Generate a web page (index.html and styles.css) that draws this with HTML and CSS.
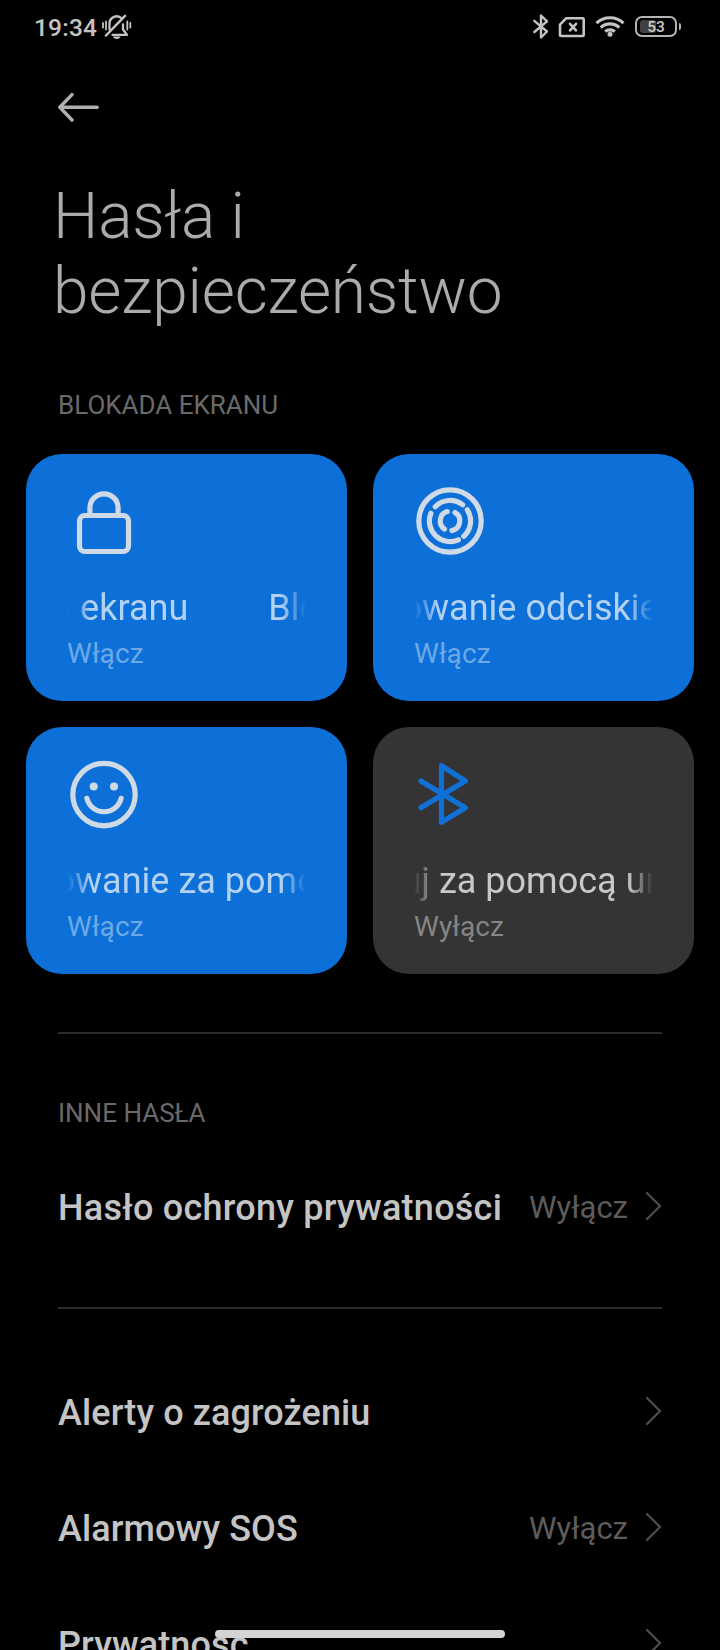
FILE: index.html
```html
<!DOCTYPE html>
<html lang="pl">
<head>
<meta charset="utf-8">
<title>Hasła i bezpieczeństwo</title>
<link rel="stylesheet" href="styles.css">
</head>
<body>
<div class="screen">
  <header class="status">
    <span class="time">19:34</span>
    <svg class="bell" width="32" height="30" viewBox="0 0 32 30" fill="none" stroke="#c4c4c4" stroke-width="2.300" stroke-linecap="round" stroke-linejoin="round">
      <path d="M8.500 17.500V11.500a7.200 7.200 0 0 1 12.300-5M22 12.500v5l4 5.400H11.500"/>
      <path d="M5 23.500 24 3.800" stroke-width="2.500"/>
      <path d="M12 24.600h7.500a3.800 2.900 0 0 1-7.500 0z" fill="#c4c4c4" stroke="none"/>
      <path d="M2 11v4.500M5 9.500v8M26.300 9.500v8M29.300 11v4.500" stroke-width="1.800"/>
    </svg>
    <div class="status-icons">
      <svg width="18" height="28" viewBox="0 0 18 28" fill="none" stroke="#c4c4c4" stroke-width="2.400" stroke-linejoin="round" stroke-linecap="round">
        <path d="M2.300 8.800 15 19.500 9 25.500V3.500l6 5.800L2.300 20"/>
      </svg>
      <svg class="sim" width="28" height="22" viewBox="0 0 28 22" fill="none" stroke="#c4c4c4" stroke-width="2.600" stroke-linejoin="round" stroke-linecap="round">
        <path d="M8.300 2.200H24.500a1.200 1.200 0 0 1 1.200 1.200V18.800a1.200 1.200 0 0 1-1.200 1.200H3.200A1.200 1.200 0 0 1 2 18.800V8.600z"/>
        <path d="M12 7.800l6 6.600M18 7.800l-6 6.600"/>
      </svg>
      <svg class="wifi" width="30" height="24" viewBox="0 0 30 24" fill="none" stroke="#c4c4c4" stroke-width="3.200">
        <path d="M1.500 9.200a19.500 19.500 0 0 1 27 0M5.800 13.600a13.200 13.200 0 0 1 18.400 0M10.200 17.700a7 7 0 0 1 9.600 0"/>
        <circle cx="15" cy="20.300" r="2.500" fill="#c4c4c4" stroke="none"/>
      </svg>
      <div class="battery"><span class="battery-level"></span><span class="battery-text">53</span></div>
      <span class="battery-cap"></span>
    </div>
  </header>

  <nav class="nav">
    <svg width="44" height="30" viewBox="0 0 44 30" fill="none" stroke="#b0b0b0" stroke-width="3.400" stroke-linecap="round" stroke-linejoin="round">
      <path d="M41.200 15.300H4M16 2.600 3.800 15.300 16 28"/>
    </svg>
  </nav>

  <h1 class="title">Hasła i<br>bezpieczeństwo</h1>

  <h2 class="section">BLOKADA EKRANU</h2>
  <div class="tiles">
    <section class="tile">
      <svg class="tile-icon" viewBox="0 0 80 80">
        <rect x="11.500" y="37.500" width="49" height="36" rx="5.500"/>
        <path d="M21.900 37V29.900a14.100 14.100 0 0 1 28.200 0V37"/>
      </svg>
      <div class="marquee"><div class="track"><span>Blokada ekranu</span><span>Blokada ekranu</span></div></div>
      <div class="state">Włącz</div>
    </section>
    <section class="tile">
      <svg class="tile-icon" viewBox="0 0 80 80">
        <circle cx="35" cy="43" r="31.200"/>
        <path d="M20.200 28.700A20.600 20.600 0 0 1 47.700 26.800M52.300 31.800A20.600 20.600 0 0 1 48.800 58.300M15.900 35.300A20.600 20.600 0 0 0 43.400 61.800"/>
        <path d="M32.300 33.600A9.800 9.800 0 0 0 29.500 51.100M40 34.600A9.800 9.800 0 0 1 36.900 52.600"/>
      </svg>
      <div class="marquee"><div class="track"><span>Odblokowanie odciskiem palca</span></div></div>
      <div class="state">Włącz</div>
    </section>
    <section class="tile">
      <svg class="tile-icon" viewBox="0 0 80 80">
        <circle cx="36" cy="43.600" r="31.200"/>
        <circle class="eye" cx="25.700" cy="35.400" r="4"/>
        <circle class="eye" cx="46" cy="35.400" r="4"/>
        <path d="M18.900 47.300a17.600 17.600 0 0 0 34.200 0"/>
      </svg>
      <div class="marquee"><div class="track"><span>Odblokowanie za pomocą twarzy</span></div></div>
      <div class="state">Włącz</div>
    </section>
    <section class="tile tile-off">
      <svg class="tile-icon" viewBox="0 0 80 80">
        <path d="M5.900 29.900 50.300 56.700 26.500 71.200V14.700L50.300 30 5.900 56.700"/>
      </svg>
      <div class="marquee"><div class="track"><span>Odblokuj za pomocą urządzenia</span></div></div>
      <div class="state">Wyłącz</div>
    </section>
  </div>

  <hr class="divider">
  <h2 class="section section-other">INNE HASŁA</h2>
  <div class="row row-privacy">
    <span class="row-label">Hasło ochrony prywatności</span><span class="row-value">Wyłącz</span>
    <svg class="chevron" viewBox="0 0 18 30"><path d="M2 2l13 13L2 28"/></svg>
  </div>
  <hr class="divider divider-second">
  <div class="list">
    <div class="row">
      <span class="row-label">Alerty o zagrożeniu</span>
      <svg class="chevron" viewBox="0 0 18 30"><path d="M2 2l13 13L2 28"/></svg>
    </div>
    <div class="row">
      <span class="row-label">Alarmowy SOS</span><span class="row-value">Wyłącz</span>
      <svg class="chevron" viewBox="0 0 18 30"><path d="M2 2l13 13L2 28"/></svg>
    </div>
    <div class="row">
      <span class="row-label">Prywatność</span>
      <svg class="chevron" viewBox="0 0 18 30"><path d="M2 2l13 13L2 28"/></svg>
    </div>
  </div>
  <div class="home-bar"></div>
</div>
</body>
</html>
```
FILE: styles.css
```css
* { box-sizing: border-box; }
html, body { margin: 0; background: #000; }
body { font-family: Roboto, "Noto Sans", sans-serif; }
svg { display: block; flex: none; }

.screen {
  position: relative;
  width: 720px;
  height: 1650px;
  overflow: hidden;
  background: #000;
}

.status {
  display: flex;
  height: 54px;
  padding: 12px 39px 0 34px;
}
.time {
  width: 67px;
  padding-top: 2px;
  font-size: 24.5px;
  font-weight: 500;
  line-height: 28px;
  letter-spacing: 0.2px;
  color: #c4c4c4;
}
.status-icons { display: flex; margin-left: auto; }
.sim { margin: 4px 0 0 8px; }
.wifi { margin: 2px 0 0 9px; }
.battery {
  position: relative;
  width: 42px;
  height: 21px;
  margin: 4px 0 0 10px;
  border: 2px solid #b4b4b4;
  border-radius: 7px;
  text-align: center;
}
.battery-level {
  position: absolute;
  left: 3px;
  top: 2px;
  width: 16px;
  height: 13px;
  border-radius: 3px;
  background: #404040;
}
.battery-text {
  position: relative;
  display: block;
  font-size: 15.5px;
  font-weight: 500;
  line-height: 18px;
  color: #ccc;
}
.battery-cap {
  width: 2px;
  height: 7px;
  margin: 11px 0 0 2px;
  border-radius: 0 2px 2px 0;
  background: #b4b4b4;
}

.nav { padding: 38px 0 0 56px; height: 125px; }

.title {
  margin: 0;
  padding-left: 53px;
  font-size: 64px;
  font-weight: 300;
  line-height: 75px;
  letter-spacing: -0.18px;
  color: #ababab;
}
.section {
  margin: 61px 0 0;
  padding-left: 58px;
  font-size: 26px;
  font-weight: 400;
  line-height: 30px;
  color: #6a6a6a;
}

.tiles {
  display: grid;
  grid-template-columns: 321px 321px;
  grid-auto-rows: 247px;
  gap: 26px;
  margin: 34px 0 0 26px;
}
.tile {
  padding: 24px 41px 0 41px;
  border-radius: 36px;
  background: #0d6fd8;
  color: #b3d1f1;
}
.tile-icon {
  width: 80px;
  height: 80px;
  margin-left: 1px;
  fill: none;
  stroke: #d0dae6;
  stroke-width: 5.2;
  stroke-linecap: round;
  stroke-linejoin: round;
}
.eye { fill: #d0dae6; stroke: none; }
.marquee {
  margin-top: 29px;
  overflow: hidden;
  -webkit-mask-image: linear-gradient(to right, transparent, #000 24px, #000 calc(100% - 25px), transparent);
  mask-image: linear-gradient(to right, transparent, #000 24px, #000 calc(100% - 25px), transparent);
}
.track {
  display: flex;
  gap: 80px;
  width: max-content;
  margin-left: -125.5px;
  font-size: 36px;
  line-height: 42px;
  letter-spacing: 0.02px;
  white-space: nowrap;
}
.state {
  margin-top: 8px;
  font-size: 28px;
  line-height: 33px;
  letter-spacing: 0.1px;
  color: #6ea9e7;
}
.tile-off { background: #343434; color: #c8c8c8; }
.tile-off .tile-icon { stroke: #1070d8; }
.tile-off .state { color: #858585; }

.divider {
  height: 2px;
  margin: 58px 58px 0;
  border: 0;
  background: #2b2b2b;
}
.section-other { margin-top: 64px; }
.row {
  display: flex;
  align-items: center;
  height: 116px;
  padding: 0 57px 0 58px;
}
.row-label {
  font-size: 36px;
  font-weight: 500;
  line-height: 42px;
  letter-spacing: 0.1px;
  color: #c4c4c4;
}
.row-value {
  margin-left: auto;
  font-size: 31px;
  line-height: 36px;
  color: #5c5c5c;
}
.chevron {
  width: 18px;
  height: 30px;
  margin: 0 0 4px auto;
  fill: none;
  stroke: #4c4c4c;
  stroke-width: 2.3;
  stroke-linecap: round;
}
.row-value + .chevron { margin-left: 17px; }
.row-privacy { margin-top: 21px; }
.row-privacy .row-label { padding-top: 2px; letter-spacing: 0.25px; }
.row-privacy .row-value { padding-top: 1px; }
.row-privacy .chevron { margin-bottom: 2px; }
.divider-second { margin-top: 42px; }
.list { margin-top: 46px; }

.home-bar {
  position: absolute;
  left: 215px;
  top: 1630px;
  width: 290px;
  height: 8px;
  border-radius: 4px;
  background: #d4d4d4;
}
```
